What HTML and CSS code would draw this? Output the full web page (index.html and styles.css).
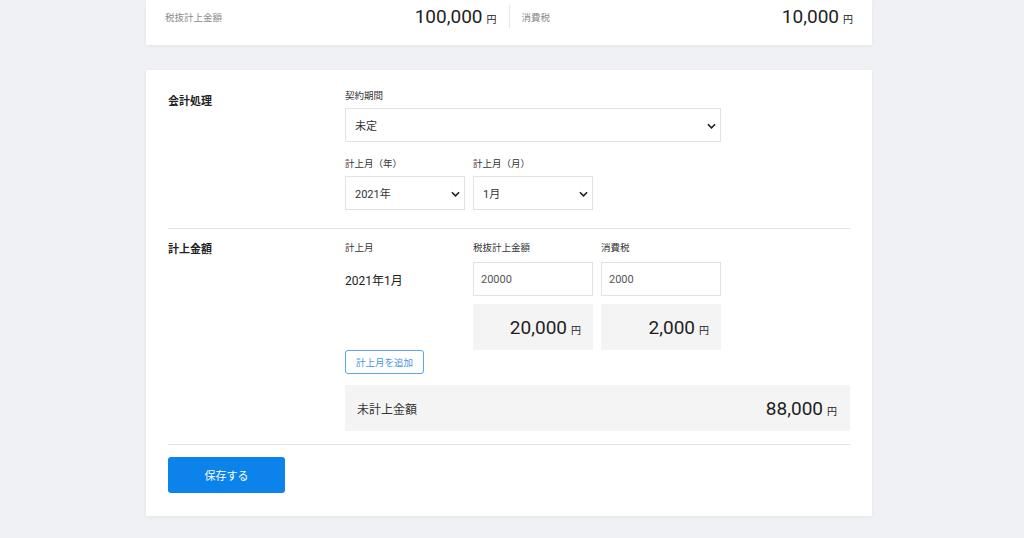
FILE: index.html
```html
<!DOCTYPE html>
<html lang="ja">
<head>
<meta charset="utf-8">
<title>会計処理</title>
<link rel="stylesheet" href="styles.css">
</head>
<body>
<div class="page">
  <div class="card summary">
    <div class="sum-half">
      <span class="sum-label">税抜計上金額</span>
      <span class="amount"><span class="num">100,000</span><span class="yen">円</span></span>
    </div>
    <div class="vdivider"></div>
    <div class="sum-half">
      <span class="sum-label">消費税</span>
      <span class="amount"><span class="num">10,000</span><span class="yen">円</span></span>
    </div>
  </div>

  <div class="card form">
    <section class="section first">
      <h2 class="sec-title">会計処理</h2>
      <div class="sec-body">
        <div class="field">
          <label class="flabel">契約期間</label>
          <div class="select wide"><span class="sel-text">未定</span><svg class="chev" viewBox="0 0 10 6" width="9" height="6"><path d="M1 1 L5 5 L9 1" fill="none" stroke="#222" stroke-width="1.8"/></svg></div>
        </div>
        <div class="field-row">
          <div class="field">
            <label class="flabel">計上月（年）</label>
            <div class="select narrow"><span class="sel-text">2021年</span><svg class="chev" viewBox="0 0 10 6" width="9" height="6"><path d="M1 1 L5 5 L9 1" fill="none" stroke="#222" stroke-width="1.8"/></svg></div>
          </div>
          <div class="field">
            <label class="flabel">計上月（月）</label>
            <div class="select narrow"><span class="sel-text">1月</span><svg class="chev" viewBox="0 0 10 6" width="9" height="6"><path d="M1 1 L5 5 L9 1" fill="none" stroke="#222" stroke-width="1.8"/></svg></div>
          </div>
        </div>
      </div>
    </section>

    <section class="section second">
      <h2 class="sec-title">計上金額</h2>
      <div class="sec-body">
        <div class="amt-grid">
          <span class="flabel">計上月</span>
          <span class="flabel">税抜計上金額</span>
          <span class="flabel">消費税</span>
          <span class="month">2021年1月</span>
          <div class="input">20000</div>
          <div class="input">2000</div>
          <span></span>
          <div class="graybox"><span class="num">20,000</span><span class="yen">円</span></div>
          <div class="graybox"><span class="num">2,000</span><span class="yen">円</span></div>
        </div>
        <button class="outline-btn">計上月を追加</button>
        <div class="total">
          <span class="total-label">未計上金額</span>
          <span class="amount"><span class="num">88,000</span><span class="yen">円</span></span>
        </div>
      </div>
    </section>

    <div class="actions">
      <button class="save-btn">保存する</button>
    </div>
  </div>
</div>
</body>
</html>
```

FILE: styles.css
```css
* { box-sizing: border-box; }
html, body { margin: 0; padding: 0; }
body {
  background: #f0f1f5;
  font-family: Roboto, "Noto Sans CJK JP", sans-serif;
  color: #222;
  height: 538px;
  overflow: hidden;
}
.page {
  width: 726px;
  margin-left: 146px;
}
.card {
  background: #fff;
  box-shadow: 0 1px 4px rgba(0, 0, 0, 0.06);
}
.summary {
  height: 45px;
  padding: 5px 19px 17px;
  display: flex;
  align-items: stretch;
}
.sum-half {
  flex: 1;
  display: flex;
  align-items: center;
  justify-content: space-between;
}
.vdivider {
  width: 1px;
  background: #e6e6e6;
  margin: 0 12px;
}
.sum-label {
  font-size: 9.5px;
  color: #8a8a8a;
}
.amount {
  display: flex;
  align-items: baseline;
}
.num {
  font-size: 19px;
  color: #1e1e1e;
}
.yen {
  font-size: 10px;
  margin-left: 4px;
  color: #222;
}

.form {
  margin-top: 25px;
  padding: 0 22px 23px;
}
.section {
  display: grid;
  grid-template-columns: 177px 1fr;
  border-bottom: 1px solid #e4e4e4;
}
.section.first { padding: 20px 0 18px; }
.section.second { padding: 13px 0 13px; }
.sec-title {
  margin: 0;
  font-size: 11px;
  font-weight: 700;
  line-height: 12px;
  padding-top: 6px;
}
.section.second .sec-title { padding-top: 2px; }
.sec-body {
  display: flex;
  flex-direction: column;
}
.field {
  display: flex;
  flex-direction: column;
}
.field-row {
  display: flex;
  gap: 8px;
  margin-top: 16px;
}
.flabel {
  font-size: 9.5px;
  line-height: 12px;
  color: #333;
}
.field .flabel { margin-bottom: 6px; }
.select {
  position: relative;
  height: 34px;
  border: 1px solid #e2e2e2;
  background: #fff;
  display: flex;
  align-items: center;
  padding-left: 9px;
}
.select.wide { width: 376px; }
.select.narrow { width: 120px; }
.sel-text {
  font-size: 11px;
  color: #333;
}
.chev {
  position: absolute;
  right: 4px;
  top: 14px;
}
.amt-grid {
  display: grid;
  grid-template-columns: 120px 120px 120px;
  grid-template-rows: 12px 34px 46px;
  column-gap: 8px;
  row-gap: 8px;
  align-items: center;
}
.amt-grid .graybox { margin-top: -1px; }
.month {
  font-size: 12px;
  color: #222;
}
.input {
  height: 34px;
  border: 1px solid #e2e2e2;
  font-size: 11px;
  color: #555;
  display: flex;
  align-items: center;
  padding-left: 7px;
}
.graybox {
  height: 46px;
  background: #f4f4f4;
  display: flex;
  align-items: baseline;
  justify-content: flex-end;
  padding: 12px 12px 0 0;
}
.outline-btn {
  align-self: flex-start;
  margin-top: 0;
  width: 79px;
  height: 24px;
  border: 1px solid #5aa5ec;
  border-radius: 3px;
  background: #fff;
  color: #4a95de;
  font-family: inherit;
  font-size: 9.5px;
  padding: 0;
}
.total {
  margin-top: 11px;
  height: 46px;
  background: #f4f4f4;
  display: flex;
  align-items: center;
  justify-content: space-between;
  padding: 0 13px 0 12px;
}
.total-label {
  font-size: 12px;
  color: #333;
}
.actions {
  padding-top: 12px;
}
.save-btn {
  width: 117px;
  height: 36px;
  border: none;
  border-radius: 3px;
  background: #0b83ea;
  color: #fff;
  font-family: inherit;
  font-size: 11px;
  padding: 0;
}
```
